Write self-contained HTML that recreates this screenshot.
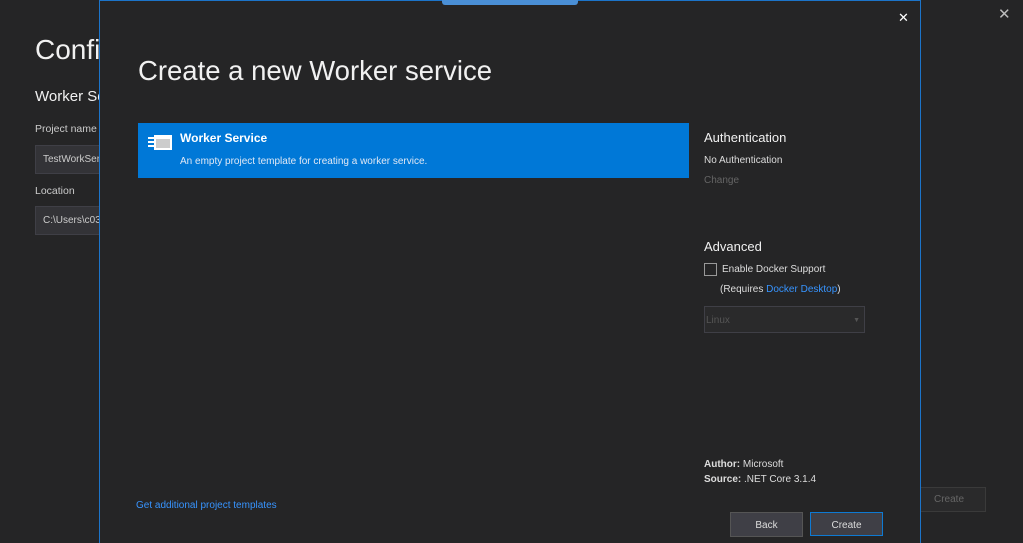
<!DOCTYPE html><html><head><style>
body{margin:0;width:1023px;height:542px;background:#252526;font-family:"Segoe UI","Liberation Sans",sans-serif;color:#f1f1f1;position:relative;overflow:hidden}
.a{position:absolute}
.lbl{font-size:10.5px;color:#ccc}
.inp{background:#333337;border:1px solid #3f3f46;font-size:10px;color:#ccc;line-height:27px;padding-left:7px;overflow:hidden;white-space:nowrap}
.s{font-size:10px}
</style></head><body>
<div class="a" style="left:35px;top:34px;font-size:28px;font-weight:300">Configure</div>
<div class="a" style="left:35px;top:88px;font-size:15px">Worker Service</div>
<div class="a lbl" style="left:35px;top:123px">Project name</div>
<div class="a inp" style="left:35px;top:145px;width:70px;height:27px">TestWorkService</div>
<div class="a lbl" style="left:35px;top:185px">Location</div>
<div class="a inp" style="left:35px;top:206px;width:70px;height:27px">C:\Users\c030</div>
<div class="a" style="left:998px;top:5px;font-size:15px;color:#bbb">✕</div>
<div class="a s" style="left:912px;top:487px;width:72px;height:23px;border:1px solid #3a3a3a;background:#2a2a2b;color:#666;text-align:center;line-height:24px">Create</div>

<div class="a" style="left:99px;top:0;width:820px;height:542px;border:1px solid #1c74c9;border-bottom:none;background:#252526;overflow:hidden">
<div class="a" style="left:38px;top:54px;font-size:27.5px;color:#f1f1f1">Create a new Worker service</div>
<div class="a" style="left:798px;top:9px;font-size:13px;color:#fff">✕</div>
<div class="a" style="left:38px;top:122px;width:551px;height:55px;background:#0078d7">
 <svg class="a" style="left:9px;top:11px" width="27" height="18" viewBox="0 0 27 18"><rect x="1" y="3" width="8" height="2" fill="#fff"/><rect x="1" y="7" width="8" height="2" fill="#fff"/><rect x="1" y="11" width="8" height="2" fill="#fff"/><rect x="7" y="1" width="18" height="15" fill="#fff"/><rect x="9" y="5" width="14" height="9" fill="#ccc"/></svg>
 <div class="a" style="left:42px;top:8px;font-size:12px;font-weight:bold;color:#fff">Worker Service</div>
 <div class="a s" style="left:42px;top:33px;color:#e0e8f5">An empty project template for creating a worker service.</div>
</div>
<div class="a" style="left:604px;top:129px;font-size:13px">Authentication</div>
<div class="a s" style="left:604px;top:154px;color:#ddd">No Authentication</div>
<div class="a s" style="left:604px;top:174px;color:#656565">Change</div>
<div class="a" style="left:604px;top:238px;font-size:13px">Advanced</div>
<div class="a" style="left:604px;top:262px;width:11px;height:11px;border:1px solid #999"></div>
<div class="a s" style="left:622px;top:263px;color:#ddd">Enable Docker Support</div>
<div class="a s" style="left:620px;top:283px;color:#ddd">(Requires <span style="color:#3794ff">Docker Desktop</span>)</div>
<div class="a s" style="left:604px;top:305px;width:158px;height:25px;border:1px solid #3f3f46;background:#2a2a2b;color:#555;line-height:27px;padding-left:1px">Linux<span style="position:absolute;right:4px;font-size:7px">▼</span></div>
<div class="a s" style="left:604px;top:458px;color:#ddd"><b>Author:</b> Microsoft</div>
<div class="a s" style="left:604px;top:473px;color:#ddd"><b>Source:</b> .NET Core 3.1.4</div>
<div class="a s" style="left:36px;top:499px;color:#3794ff">Get additional project templates</div>
<div class="a s" style="left:630px;top:511px;width:71px;height:23px;border:1px solid #555;background:#3f3f46;text-align:center;line-height:25px;color:#ddd">Back</div>
<div class="a s" style="left:710px;top:511px;width:71px;height:22px;border:1px solid #0e7ad3;background:#3f3f46;text-align:center;line-height:25px;color:#ddd">Create</div>
</div>
<div class="a" style="left:442px;top:0;width:136px;height:5px;background:#4a8fd6;border-radius:0 0 3px 3px"></div>
</body></html>
